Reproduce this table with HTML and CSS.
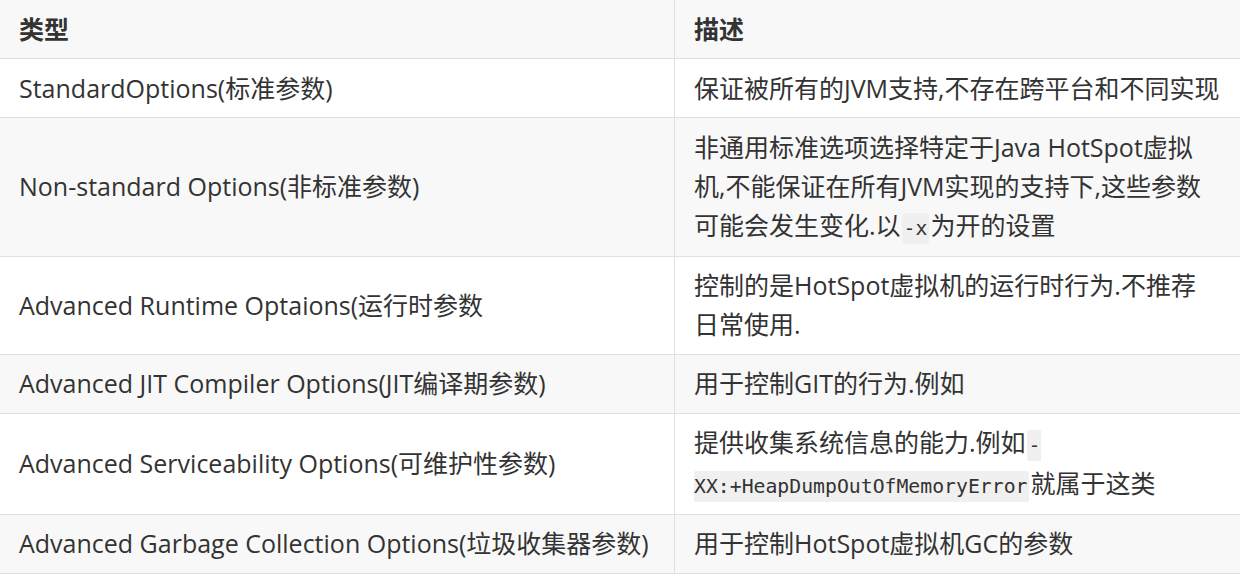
FILE: index.html
```html
<!DOCTYPE html>
<html lang="zh-CN">
<head>
<meta charset="utf-8">
<title>JVM 参数类型</title>
<link rel="stylesheet" href="styles.css">
</head>
<body>
<table class="opts">
  <colgroup>
    <col class="col-type">
    <col class="col-desc">
  </colgroup>
  <thead>
    <tr><th>类型</th><th>描述</th></tr>
  </thead>
  <tbody>
    <tr><td>StandardOptions(标准参数)</td><td>保证被所有的JVM支持,不存在跨平台和不同实现</td></tr>
    <tr><td>Non-standard Options(非标准参数)</td><td>非通用标准选项选择特定于Java HotSpot虚拟<br>机,不能保证在所有JVM实现的支持下,这些参数<br>可能会发生变化.以<code>-x</code>为开的设置</td></tr>
    <tr><td>Advanced Runtime Optaions(运行时参数</td><td>控制的是HotSpot虚拟机的运行时行为.不推荐<br>日常使用.</td></tr>
    <tr><td>Advanced JIT Compiler Options(JIT编译期参数)</td><td>用于控制GIT的行为.例如</td></tr>
    <tr><td>Advanced Serviceability Options(可维护性参数)</td><td>提供收集系统信息的能力.例如<code>-<wbr>XX:+HeapDumpOutOfMemoryError</code>就属于这类</td></tr>
    <tr><td>Advanced Garbage Collection Options(垃圾收集器参数)</td><td>用于控制HotSpot虚拟机GC的参数</td></tr>
  </tbody>
</table>
</body>
</html>
```

FILE: styles.css
```css
html, body {
  margin: 0;
  padding: 0;
  background: #ffffff;
}

body {
  font-family: "Open Sans", "Noto Sans CJK SC", sans-serif;
  font-size: 25px;
  line-height: 39px;
  color: #333333;
  overflow: hidden;
}

.opts {
  border-collapse: collapse;
  table-layout: fixed;
  width: 1242px;
  margin: -1px 0 0 -1px;
}

.col-type { width: 675px; }
.col-desc { width: 567px; }

.opts th,
.opts td {
  border: 1px solid #dfe2e5;
  padding: 9.5px 19px;
  text-align: left;
  vertical-align: middle;
}

.opts th {
  font-weight: 700;
}

.opts td:nth-child(2),
.opts th:nth-child(2) {
  padding-left: 19px;
  padding-right: 20px;
}

.opts thead tr,
.opts tbody tr:nth-child(2n) {
  background: #f8f8f8;
}

.opts code {
  font-family: "DejaVu Sans Mono", monospace;
  font-size: 19.8px;
  line-height: 34.5px;
  background: #f0f0f0;
  border-radius: 3px;
  padding: 4px 2px;
  margin: 0 1px;
}
```
